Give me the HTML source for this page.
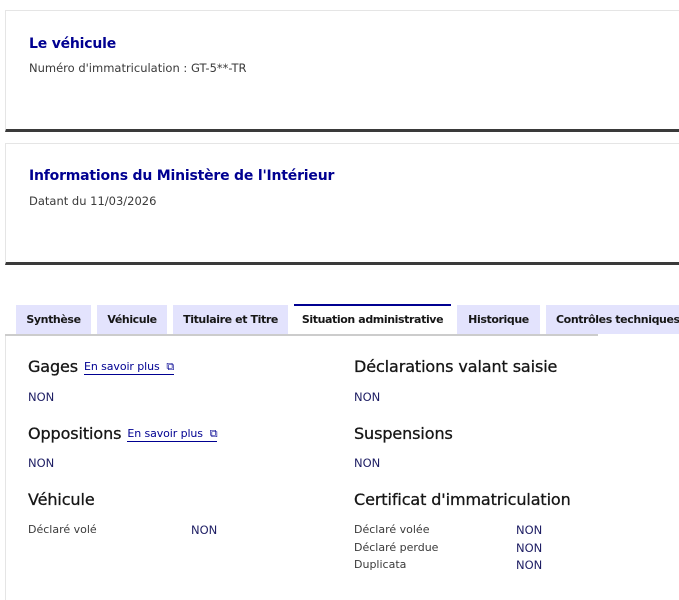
<!DOCTYPE html>
<html><head><meta charset="utf-8"><style>
body{margin:0;width:679px;height:600px;overflow:hidden;background:#fff;font-family:"DejaVu Sans","Liberation Sans",sans-serif;color:#161616}
.card{position:absolute;left:5px;width:700px;border:1px solid #e5e5e5;border-bottom:3px solid #3a3a3a;box-sizing:border-box}
.card h2{position:absolute;left:23px;margin:0;font-size:14px;font-weight:bold;color:#000091;letter-spacing:-0.2px}
.card p{position:absolute;left:23px;margin:0;font-size:11.5px;color:#3a3a3a}
.tab{position:absolute;top:305px;height:29px;background:#e3e3fd;font-size:11px;font-weight:bold;line-height:29px;text-align:center;color:#161616;letter-spacing:-0.4px}
.tab.act{background:#fff;border-top:2px solid #000091;box-sizing:border-box;line-height:27px}
h3{position:absolute;margin:0;font-size:16px;font-weight:normal;letter-spacing:-0.1px;-webkit-text-stroke:0.3px #161616}
.v{position:absolute;font-size:11.5px;color:#1e1e64}
.l{position:absolute;font-size:11px;color:#3a3a3a}
.lk{font-size:11px;color:#000091;border-bottom:1px solid #000091;margin-left:6px;padding-bottom:1px;-webkit-text-stroke:0;vertical-align:2px}
</style></head><body>
<div class="card" style="top:10px;height:122px"><h2 style="top:25px">Le véhicule</h2><p style="top:50px">Numéro d'immatriculation : GT-5**-TR</p></div>
<div class="card" style="top:143px;height:122px"><h2 style="top:24px">Informations du Ministère de l'Intérieur</h2><p style="top:50px">Datant du 11/03/2026</p></div>
<div class="tab" style="left:16px;width:75px">Synthèse</div>
<div class="tab" style="left:97px;width:70px">Véhicule</div>
<div class="tab" style="left:173px;width:115px">Titulaire et Titre</div>
<div class="tab act" style="left:294px;width:157px;top:304px;height:31px">Situation administrative</div>
<div class="tab" style="left:457px;width:83px">Historique</div>
<div class="tab" style="left:546px;width:140px;text-align:left;padding-left:10px;box-sizing:border-box">Contrôles techniques</div>
<div style="position:absolute;left:5px;top:334px;width:593px;height:2px;background:#ccc"></div>
<div style="position:absolute;left:5px;top:336px;width:1px;height:264px;background:#e5e5e5"></div>
<h3 style="left:28px;top:357px">Gages<span class="lk">En savoir plus &nbsp;⧉</span></h3>
<h3 style="left:354px;top:357px">Déclarations valant saisie</h3>
<div class="v" style="left:28px;top:390px">NON</div><div class="v" style="left:354px;top:390px">NON</div>
<h3 style="left:28px;top:424px">Oppositions<span class="lk">En savoir plus &nbsp;⧉</span></h3>
<h3 style="left:354px;top:424px">Suspensions</h3>
<div class="v" style="left:28px;top:456px">NON</div><div class="v" style="left:354px;top:456px">NON</div>
<h3 style="left:28px;top:490px">Véhicule</h3>
<h3 style="left:354px;top:490px">Certificat d'immatriculation</h3>
<div class="l" style="left:28px;top:523px">Déclaré volé</div><div class="v" style="left:191px;top:523px">NON</div>
<div class="l" style="left:354px;top:523px">Déclaré volée</div><div class="v" style="left:516px;top:523px">NON</div>
<div class="l" style="left:354px;top:541px">Déclaré perdue</div><div class="v" style="left:516px;top:541px">NON</div>
<div class="l" style="left:354px;top:558px">Duplicata</div><div class="v" style="left:516px;top:558px">NON</div>
</body></html>
